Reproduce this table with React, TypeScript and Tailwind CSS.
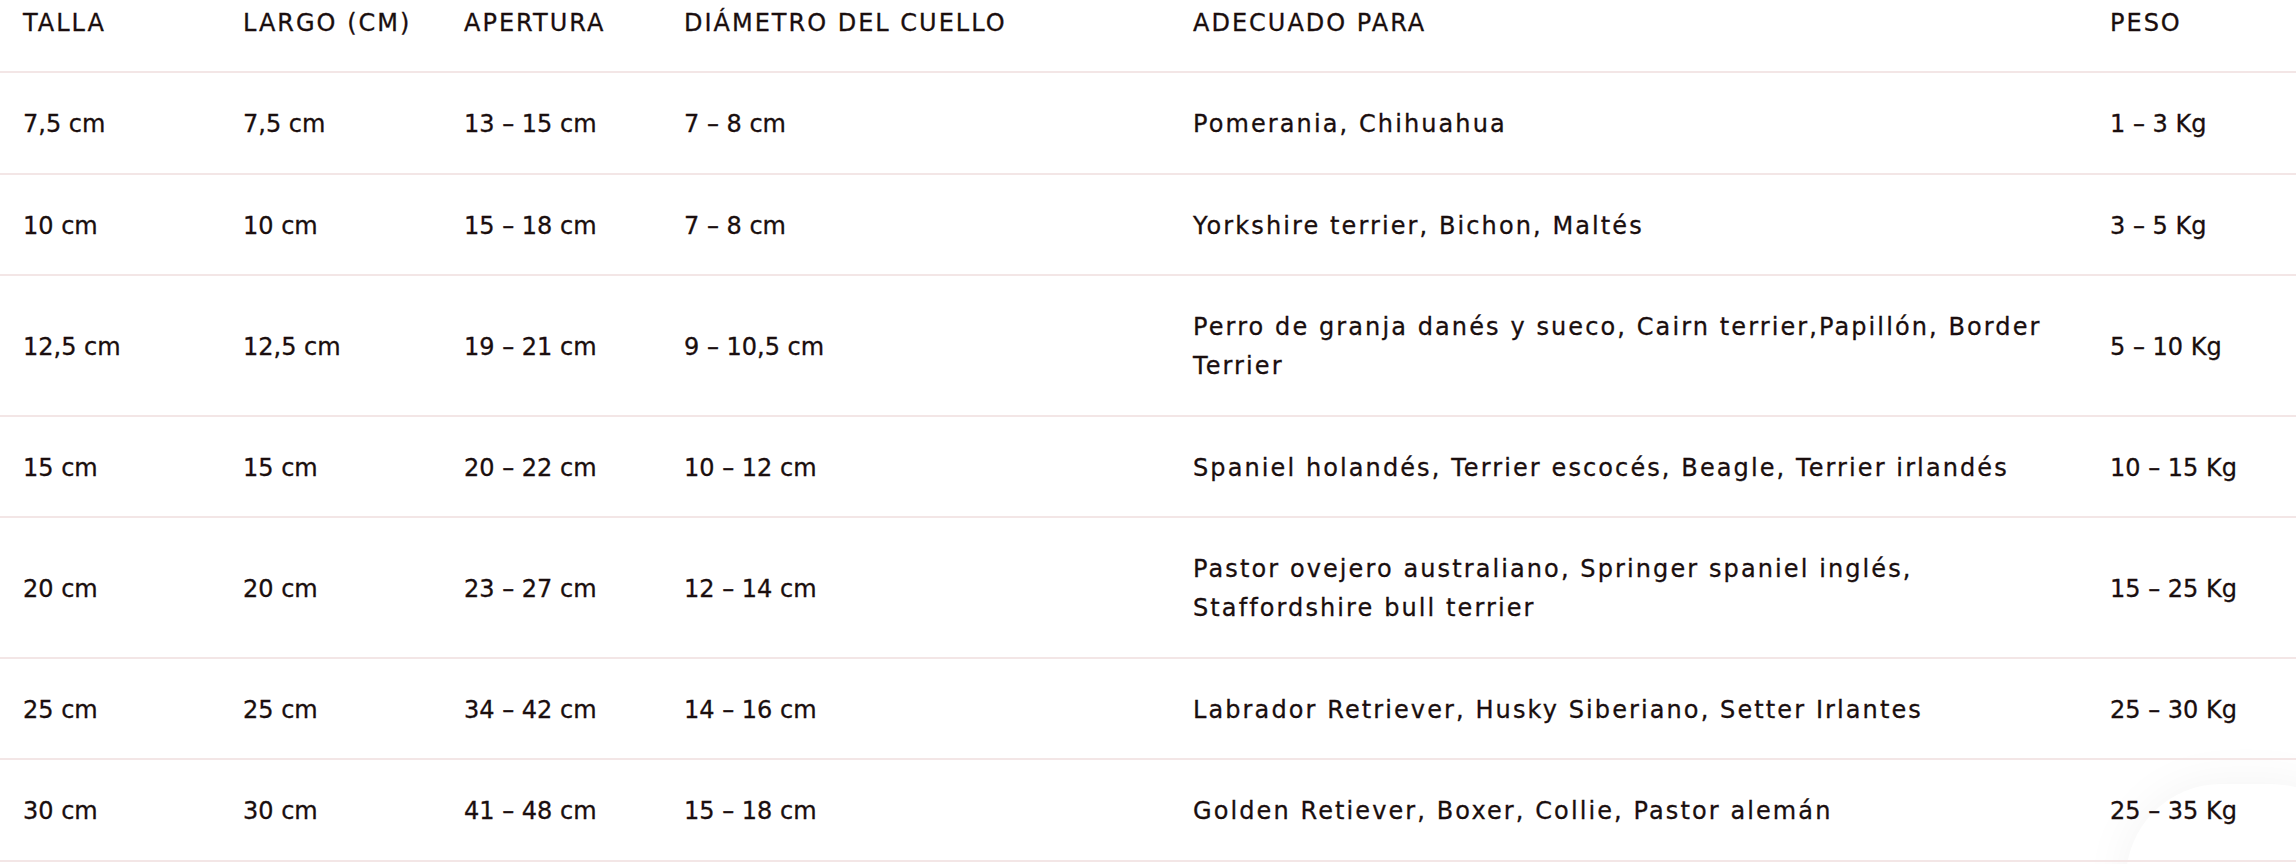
const headers = [
  "Talla",
  "Largo (cm)",
  "Apertura",
  "Diámetro del cuello",
  "Adecuado para",
  "Peso",
];

const rows: string[][] = [
  ["7,5 cm", "7,5 cm", "13 – 15 cm", "7 – 8 cm", "Pomerania, Chihuahua", "1 – 3 Kg"],
  ["10 cm", "10 cm", "15 – 18 cm", "7 – 8 cm", "Yorkshire terrier, Bichon, Maltés", "3 – 5 Kg"],
  [
    "12,5 cm",
    "12,5 cm",
    "19 – 21 cm",
    "9 – 10,5 cm",
    "Perro de granja danés y sueco, Cairn terrier,Papillón, Border Terrier",
    "5 – 10 Kg",
  ],
  [
    "15 cm",
    "15 cm",
    "20 – 22 cm",
    "10 – 12 cm",
    "Spaniel holandés, Terrier escocés, Beagle, Terrier irlandés",
    "10 – 15 Kg",
  ],
  [
    "20 cm",
    "20 cm",
    "23 – 27 cm",
    "12 – 14 cm",
    "Pastor ovejero australiano, Springer spaniel inglés, Staffordshire bull terrier",
    "15 – 25 Kg",
  ],
  [
    "25 cm",
    "25 cm",
    "34 – 42 cm",
    "14 – 16 cm",
    "Labrador Retriever, Husky Siberiano, Setter Irlantes",
    "25 – 30 Kg",
  ],
  ["30 cm", "30 cm", "41 – 48 cm", "15 – 18 cm", "Golden Retiever, Boxer, Collie, Pastor alemán", "25 – 35 Kg"],
];

const widths = ["w-[220px]", "w-[221px]", "w-[220px]", "w-[509px]", "w-[917px]", "w-[209px]"];

export default function App() {
  return (
    <div className="relative h-[864px] w-full overflow-hidden bg-white font-['DejaVu_Sans',sans-serif] text-[24px] leading-[39px] text-[#1a0e0e] [-webkit-text-stroke:0.3px_#1a0e0e]">
      {/* shadow of a floating button cut off at the corner, sits under the table */}
      <div className="absolute -bottom-[110px] -right-[70px] h-[190px] w-[240px] rounded-full bg-white shadow-[0_0_50px_rgba(0,0,0,0.05)]" />
      <table className="relative w-[2296px] table-fixed border-collapse">
        <colgroup>
          {widths.map((w, i) => (
            <col key={i} className={w} />
          ))}
        </colgroup>
        <thead>
          <tr className="h-[72px] border-b-2 border-[#f3e6e6]">
            {headers.map((h) => (
              <th
                key={h}
                className="px-[23px] pt-[4px] pb-[26px] text-left align-top font-normal uppercase tracking-[2px]"
              >
                {h}
              </th>
            ))}
          </tr>
        </thead>
        <tbody>
          {rows.map((row, i) => (
            <tr key={i} className="border-b-2 border-[#f3e6e6]">
              {row.map((cell, j) => (
                <td
                  key={j}
                  className={
                    j === 4
                      ? "px-[23px] pt-[32px] pb-[28.5px] align-middle tracking-[2.1px]"
                      : "px-[23px] pt-[32px] pb-[28.5px] align-middle"
                  }
                >
                  {cell}
                </td>
              ))}
            </tr>
          ))}
        </tbody>
      </table>
    </div>
  );
}
